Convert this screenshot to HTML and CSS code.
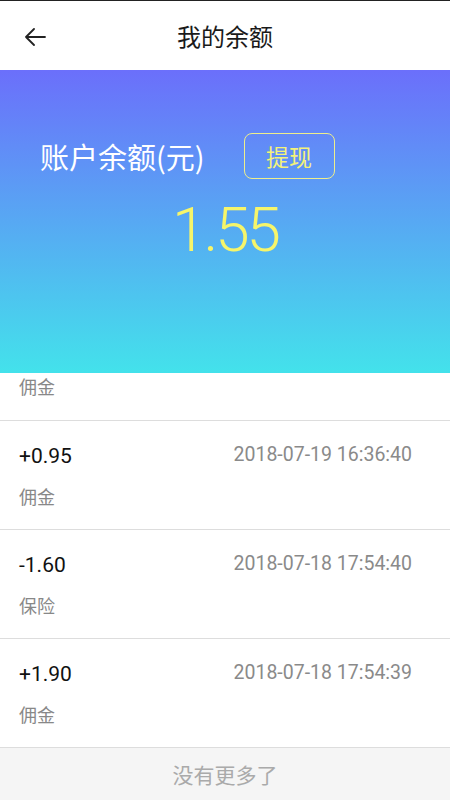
FILE: index.html
```html
<!DOCTYPE html>
<html>
<head>
  <meta charset="utf-8">
  <title>我的余额</title>
  <link rel="stylesheet" href="styles.css">
</head>
<body>

  <!-- Top bar -->
  <div class="topbar">
    <svg class="back" width="22" height="18" viewBox="0 0 22 18">
      <path d="M10 1 L2 9 L10 17 M2 9 H21" fill="none" stroke="#222" stroke-width="1.8" stroke-linecap="round" stroke-linejoin="round"/>
    </svg>
    <div class="title">我的余额</div>
  </div>

  <!-- Balance panel -->
  <div class="balance">
    <div class="balance-row">
      <span class="balance-label">账户余额(元)</span>
      <span class="withdraw">提现</span>
    </div>
    <div class="balance-amount">1.55</div>
  </div>

  <!-- Records -->
  <div class="records">
    <div class="record record-cut">
      <div class="record-type">佣金</div>
    </div>
    <div class="record">
      <div class="record-top">
        <span class="record-amount">+0.95</span>
        <span class="record-time">2018-07-19 16:36:40</span>
      </div>
      <div class="record-type">佣金</div>
    </div>
    <div class="record">
      <div class="record-top">
        <span class="record-amount">-1.60</span>
        <span class="record-time">2018-07-18 17:54:40</span>
      </div>
      <div class="record-type">保险</div>
    </div>
    <div class="record">
      <div class="record-top">
        <span class="record-amount">+1.90</span>
        <span class="record-time">2018-07-18 17:54:39</span>
      </div>
      <div class="record-type">佣金</div>
    </div>
  </div>

  <div class="nomore">没有更多了</div>

</body>
</html>
```

FILE: styles.css
```css
body {
  margin: 0;
  background: #fff;
  font-family: "Noto Sans CJK SC", "Noto Sans", sans-serif;
  overflow: hidden;
}

.topbar {
  position: relative;
  height: 69px;
  border-top: 1px solid #222;
  display: flex;
  align-items: center;
  justify-content: center;
}

.back {
  position: absolute;
  left: 24px;
  top: 27px;
}

.title {
  font-size: 24px;
  color: #1a1a1a;
}

.balance {
  height: 303px;
  background: linear-gradient(to bottom, #6b6ffb, #43e2eb);
  display: flex;
  flex-direction: column;
}

.balance-row {
  margin-top: 63px;
  padding-left: 40px;
  display: flex;
  align-items: center;
  gap: 39px;
}

.balance-label {
  font-size: 29px;
  color: #fff;
  line-height: 1;
}

.withdraw {
  font-size: 23px;
  color: #f4f27a;
  border: 1.5px solid #eeee8c;
  border-radius: 8px;
  width: 89px;
  height: 44px;
  display: flex;
  align-items: center;
  justify-content: center;
  line-height: 1;
}

.balance-amount {
  margin-top: 20px;
  align-self: center;
  font-family: Roboto, sans-serif;
  font-size: 62px;
  font-weight: 300;
  letter-spacing: -3px;
  color: #f6f56a;
  line-height: 1;
}

.records {
  background: #fff;
}

.record {
  height: 108px;
  border-bottom: 1px solid #ddd;
  padding: 0 19px;
}

.record-cut {
  height: 46px;
}

.record-cut .record-type {
  margin-top: 1px;
}

.record-top {
  display: flex;
  justify-content: space-between;
  align-items: center;
  padding-top: 19px;
  padding-right: 19px;
}

.record-amount {
  font-family: Roboto, sans-serif;
  font-size: 21px;
  color: #111;
  line-height: 32px;
}

.record-time {
  font-family: Roboto, sans-serif;
  font-size: 19.5px;
  color: #8a8a8a;
  line-height: 28px;
  margin-bottom: 3px;
}

.record-type {
  font-size: 18px;
  color: #888;
  margin-top: 12px;
  line-height: 24px;
}

.nomore {
  height: 52px;
  background: #f5f5f5;
  color: #aaa;
  font-size: 21px;
  display: flex;
  align-items: center;
  justify-content: center;
}
```
